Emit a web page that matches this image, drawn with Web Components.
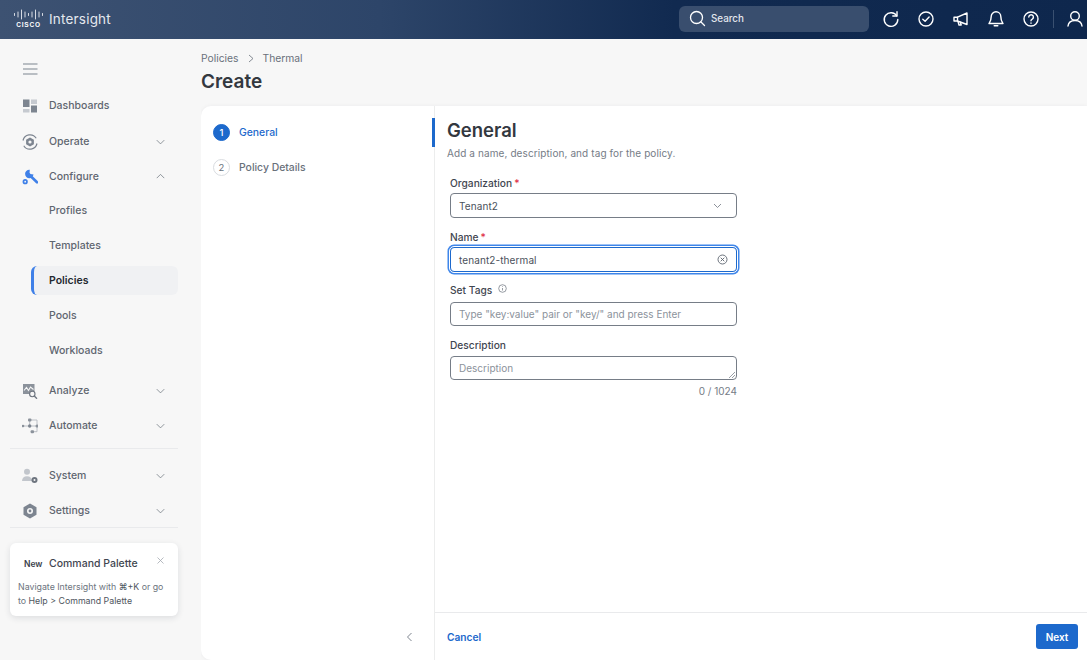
<!DOCTYPE html>
<html>
<head>
<meta charset="utf-8">
<title>Intersight</title>
<style>
  html, body { margin: 0; height: 100%; }
  body { font-family: Inter, "Liberation Sans", sans-serif; background: #f7f7f7; overflow: hidden; }
  app-shell { height: 660px; }
</style>
</head>
<body>
<app-shell>
  <top-bar slot="top"></top-bar>
  <side-nav slot="side">
    <nav-item label="Dashboards" icon="dash"></nav-item>
    <nav-item label="Operate" icon="operate" chevron="down" style="margin-top:1px"></nav-item>
    <nav-item label="Configure" icon="configure" chevron="up" style="margin-bottom:-1px"></nav-item>
    <nav-item label="Profiles" sub></nav-item>
    <nav-item label="Templates" sub></nav-item>
    <nav-item label="Policies" sub active></nav-item>
    <nav-item label="Pools" sub></nav-item>
    <nav-item label="Workloads" sub></nav-item>
    <nav-item label="Analyze" icon="analyze" chevron="down" class="gap"></nav-item>
    <nav-item label="Automate" icon="automate" chevron="down"></nav-item>
    <nav-divider></nav-divider>
    <nav-item label="System" icon="system" chevron="down"></nav-item>
    <nav-item label="Settings" icon="settings" chevron="down"></nav-item>
    <nav-divider class="last"></nav-divider>
    <promo-card></promo-card>
  </side-nav>
  <create-page slot="main"></create-page>
</app-shell>

<script>
// icons used by the nav and the top bar
const ICONS = {
  dash: `<rect x="1" y="1.500" width="6.500" height="7.500" fill="#7d8590"/><rect x="9" y="1.500" width="6" height="4.500" fill="#c6cad0"/><rect x="1" y="11" width="6.500" height="3.500" fill="#c6cad0"/><rect x="9" y="7.500" width="6" height="7" fill="#7d8590"/>`,
  operate: `<path d="M1 6.500A7.200 7.200 0 0 1 14.200 4.300M15 9.500A7.200 7.200 0 0 1 1.800 11.700" fill="none" stroke="#7d8590" stroke-width="1.200"/><path d="M8 3.500l3.900 2.250v4.500L8 12.500l-3.900-2.250v-4.500z" fill="#7d8590"/><circle cx="8" cy="8" r="1.600" fill="#f7f7f7"/>`,
  configure: `<circle cx="7.300" cy="5" r="4.200" fill="#3f80e8"/><path d="M7.500 5L7.800 0H13L12 5.500z" fill="#f7f7f7"/><circle cx="7.300" cy="5" r="1" fill="#3f80e8"/><path d="M8 6.500l7 6.800" stroke="#3f80e8" stroke-width="2.600" stroke-linecap="round"/><circle cx="3.200" cy="12.700" r="2.600" fill="#3f80e8"/><circle cx="3.200" cy="12.700" r=".9" fill="#f7f7f7"/>`,
  analyze: `<rect x="1" y="1" width="11.500" height="10" fill="#8b929b"/><path d="M2 7.500l2.500-3 2 3 2-3.500 3 2.500" fill="none" stroke="#f7f7f7" stroke-width="1.100"/><circle cx="10.300" cy="11" r="2.700" fill="#f7f7f7" stroke="#6e757f" stroke-width="1.100"/><path d="M12.300 13l2.700 2.800" stroke="#6e757f" stroke-width="1.300"/>`,
  automate: `<path d="M1 8h14M7.700 2v6M7.700 2H15v6M15 8v5.700h-4.700" fill="none" stroke="#b4b9c0" stroke-width=".9"/><circle cx="1" cy="8" r="1.300" fill="#8b929b"/><circle cx="7.700" cy="8" r="1.700" fill="#7d8590"/><circle cx="15" cy="8" r="1.500" fill="#8b929b"/><rect x="6" y=".500" width="3.400" height="3" rx="1" fill="#8b929b"/><rect x="8.600" y="12.200" width="3.400" height="3" rx="1" fill="#8b929b"/>`,
  system: `<circle cx="5" cy="3.800" r="3" fill="#c2c6cc"/><path d="M0 13c0-3 2-4.800 5-4.800S10 10 10 13z" fill="#c2c6cc"/><circle cx="12.500" cy="12" r="3" fill="#6e757f"/><circle cx="12.500" cy="12" r="1" fill="#f7f7f7"/>`,
  settings: `<path d="M8 .5l6.500 3.700v7.600L8 15.500l-6.500-3.700V4.200z" fill="#7d8590"/><circle cx="8" cy="8" r="3" fill="#f7f7f7"/><circle cx="8" cy="8" r="1.400" fill="#7d8590"/>`
};

class AppShell extends HTMLElement {
  constructor() {
    super();
    this.attachShadow({ mode: 'open' });
    this.shadowRoot.innerHTML = `
      <style>
        :host { display: grid; grid-template-rows: 39px 1fr; grid-template-columns: 201px 1fr; }
        .top { grid-column: 1 / 3; }
        .main { min-width: 0; min-height: 0; }
      </style>
      <div class="top"><slot name="top"></slot></div>
      <div><slot name="side"></slot></div>
      <div class="main"><slot name="main"></slot></div>`;
  }
}

class TopBar extends HTMLElement {
  constructor() {
    super();
    this.attachShadow({ mode: 'open' });
    const s = 'fill="none" stroke="#fff" stroke-width="1.400" stroke-linecap="round" stroke-linejoin="round"';
    this.shadowRoot.innerHTML = `
      <style>
        :host { display: flex; align-items: center; box-sizing: border-box; height: 39px; padding-bottom: 2px; color: #fff;
          background: linear-gradient(90deg, #3d5272 0%, #2d4569 35%, #112a50 62%, #0e274d 100%); }
        .logo { display: flex; flex-direction: column; align-items: center; width: 29px; margin: 0 6px 0 14px; }
        .logo svg { display: block; }
        .logo span { font: 700 6.500px/7px "Liberation Sans", sans-serif; letter-spacing: .8px; margin-top: 1px; }
        .name { font-size: 13.500px; font-weight: 400; letter-spacing: .2px; color: #e4e8ee; }
        .search { margin-left: auto; width: 190px; height: 26px; box-sizing: border-box; padding-left: 10px;
          display: flex; align-items: center; gap: 5px; border-radius: 6px; background: #394e6e;
          font-size: 9.800px; font-weight: 500; color: #e3e7ed; }
        .tools { display: flex; align-items: center; margin-left: 13px; gap: 17px; padding-right: 3px; }
        .tools svg { display: block; width: 18px; height: 18px; }
        .sep { width: 1px; height: 18px; background: #3a5070; margin: 0 -5px 0 -4px; }
      </style>
      <div class="logo">
        <svg width="29" height="11" viewBox="0 0 29 11" stroke="#e8ebf0" stroke-width=".9" stroke-linecap="round">
          <path d="M.5 4.500v2M4 3v5M7.500 1v9M11 3v5M14.500 4.500v2M18 3v5M21.500 1v9M25 3v5M28.500 4.500v2"/>
        </svg>
        <span>CISCO</span>
      </div>
      <div class="name">Intersight</div>
      <div class="search">
        <svg width="17" height="17" viewBox="0 0 17 17" fill="none" stroke="#fff" stroke-width="1.300"><circle cx="7.500" cy="7.500" r="6"/><path d="M12 12l3.500 3.500" stroke-linecap="round"/></svg>
        Search
      </div>
      <div class="tools">
        <svg viewBox="0 0 18 18" ${s}><path d="M14.800 6A6.800 6.800 0 1 0 15.800 9.500"/><path d="M15 1.800V6h-4.200"/></svg>
        <svg viewBox="0 0 18 18" ${s}><circle cx="9" cy="9" r="7"/><path d="M5.800 9.300l2.300 2 4-4.200"/></svg>
        <svg viewBox="0 0 18 18" ${s}><path d="M2 7.200h3.500L15 3v11.500L5.500 11H2z"/><path d="M5.500 7.200V11M6 11.500l1 3.500h2.200l-.8-2.800"/></svg>
        <svg viewBox="0 0 18 18" ${s}><path d="M9 1.800a4.800 4.800 0 0 0-4.800 4.800c0 4.200-1.700 5.900-2.200 6.900h14c-.5-1-2.200-2.700-2.200-6.900A4.800 4.800 0 0 0 9 1.800z"/><path d="M7.200 15.800h3.600"/></svg>
        <svg viewBox="0 0 18 18" ${s}><circle cx="9" cy="9" r="7"/><path d="M6.800 7a2.300 2.300 0 1 1 3.400 2.100c-.8.400-1.200.9-1.200 1.700"/><path d="M9 13v.2"/></svg>
        <span class="sep"></span>
        <svg viewBox="0 0 18 18" ${s}><circle cx="9" cy="6" r="4.300"/><path d="M2 16c.4-3.200 3-5.500 7-5.500s6.600 2.300 7 5.500"/></svg>
      </div>`;
  }
}

class SideNav extends HTMLElement {
  constructor() {
    super();
    this.attachShadow({ mode: 'open' });
    this.shadowRoot.innerHTML = `
      <style>
        :host { display: block; box-sizing: border-box; width: 168px; margin-left: 10px; padding-top: 20px; }
        .burger { display: block; margin: 0 0 9px 13px; }
      </style>
      <svg class="burger" width="15" height="20" viewBox="0 0 15 20" stroke="#7d8590" stroke-width="1.200"><path d="M0 5h14.500M0 10h14.500M0 15h14.500"/></svg>
      <slot></slot>`;
  }
}

class NavItem extends HTMLElement {
  connectedCallback() {
    if (this.shadowRoot) return;
    this.attachShadow({ mode: 'open' });
    const icon = this.getAttribute('icon');
    const chev = this.getAttribute('chevron');
    const path = chev === 'up' ? 'M1 6.500l5-5 5 5' : 'M1 2.500l5 5 5-5';
    this.shadowRoot.innerHTML = `
      <style>
        :host { display: flex; align-items: center; height: 35px; font-size: 10.500px; font-weight: 500; color: #5f6670; }
        :host(.gap) { margin-top: 5px; }
        .icon { width: 16px; height: 16px; margin-left: 12px; margin-right: 11px; flex: none; }
        .label { flex: 1; }
        .chev { margin-right: 13px; }
        .row { display: flex; align-items: center; flex: 1; height: 29px; margin-left: 21px; padding-left: 15px;
          border-radius: 6px; border-left: 3px solid transparent; }
        :host([active]) .row { background: #f0f1f3; border-left-color: #3f80e8; color: #23282f; font-weight: 600; }
      </style>
      ${this.hasAttribute('sub')
        ? `<div class="row"><span class="label">${this.getAttribute('label')}</span></div>`
        : `<svg class="icon" viewBox="0 0 16 16">${ICONS[icon] || ''}</svg>
           <span class="label">${this.getAttribute('label')}</span>
           ${chev ? `<svg class="chev" width="9" height="8" viewBox="0 0 12 10" fill="none" stroke="#6e757f" stroke-width="1"><path d="${path}"/></svg>` : ''}`}`;
  }
}

class NavDivider extends HTMLElement {
  constructor() {
    super();
    this.attachShadow({ mode: 'open' });
    this.shadowRoot.innerHTML = `
      <style>
        :host { display: block; height: 1px; background: #e9eaec; margin: 5px 0 9px; }
        :host(.last) { margin: -1px 0 15px; }
      </style>`;
  }
}

class PromoCard extends HTMLElement {
  constructor() {
    super();
    this.attachShadow({ mode: 'open' });
    this.shadowRoot.innerHTML = `
      <style>
        :host { display: block; box-sizing: border-box; height: 73px; padding: 14px 8px 0; background: #fff;
          border-radius: 6px; box-shadow: 0 2px 6px rgba(30, 40, 60, .12); position: relative; }
        .head { display: flex; align-items: baseline; padding-left: 6px; font-size: 10.500px; font-weight: 500; color: #3f4650; }
        .new { font-size: 8.500px; font-weight: 600; width: 25px; color: #3a414b; }
        .x { position: absolute; top: 13px; right: 13px; }
        p { margin: 10px 0 0; font-size: 8.800px; line-height: 14px; color: #6d747e; }
        b { font-weight: 400; color: #4f5660; }
      </style>
      <div class="head"><span class="new">New</span>Command Palette</div>
      <svg class="x" width="9" height="9" viewBox="0 0 9 9" stroke="#a4a9b1" stroke-width=".8"><path d="M1.500 1.500l6 6M7.500 1.500l-6 6"/></svg>
      <p>Navigate Intersight with <b>⌘+K</b> or go<br>to <b>Help &gt; Command Palette</b></p>`;
  }
}

class FormField extends HTMLElement {
  connectedCallback() {
    if (this.shadowRoot) return;
    this.attachShadow({ mode: 'open' });
    const req = this.hasAttribute('required') ? '<i>*</i>' : '';
    this.shadowRoot.innerHTML = `
      <style>
        :host { display: block; width: 287px; }
        label { display: flex; align-items: center; height: 12px; margin-bottom: var(--label-gap, 4px); font-size: 10.200px; font-weight: 500; color: #3f4650; }
        i { font-style: normal; color: #e0344a; margin-left: 2px; }
        .box { position: relative; display: flex; align-items: center; box-sizing: border-box; height: 25px; padding: 0 8px;
          background: #fff; border: 1px solid #767d87; border-radius: 4px; font-size: 10px; color: #4a515b; letter-spacing: .1px; }
        :host([focused]) .box { border-color: #1d69cc; outline: 1px solid #fff; box-shadow: 0 0 0 2.500px #3f86ea; }
        :host([ghost]) .box { height: 24px; color: #8b929b; letter-spacing: 0; }
        .text { flex: 1; white-space: nowrap; }
        ::slotted(svg) { display: block; }
      </style>
      <label>${this.getAttribute('label')}${req}<slot name="hint"></slot></label>
      <div class="box"><span class="text">${this.getAttribute('value')}</span><slot></slot></div>`;
  }
}

class CreatePage extends HTMLElement {
  constructor() {
    super();
    this.attachShadow({ mode: 'open' });
    this.shadowRoot.innerHTML = `
      <style>
        :host { display: flex; flex-direction: column; height: 621px; overflow: hidden; }
        .crumbs { display: flex; align-items: center; gap: 9px; height: 14px; margin-top: 12px; font-size: 10.300px; color: #6a717b; }
        h1 { margin: 6px 0 13px; font-size: 19px; line-height: 22px; font-weight: 600; color: #33383f; }
        .card { flex: 1; display: flex; min-height: 0; background: #fff; border-radius: 10px 0 0 10px; box-shadow: 0 0 4px rgba(30, 40, 60, .05); }
        .steps { position: relative; box-sizing: border-box; width: 233px; padding: 17px 12px 0; flex: none; }
        .step { display: flex; align-items: center; gap: 9px; height: 18px; margin-bottom: 17px; font-size: 10.400px; font-weight: 500; color: #6a717b; }
        .step span { display: flex; align-items: center; justify-content: center; box-sizing: border-box; width: 17px; height: 17px; border-radius: 50%;
          border: 1px solid #d9dce0; font-size: 9.500px; font-weight: 400; }
        .step.on { color: #1d69cc; }
        .step.on span { background: #1d69cc; border-color: #1d69cc; color: #fff; font-weight: 500; }
        .collapse { position: absolute; bottom: 18px; right: 21px; }
        .panel { flex: 1; display: flex; flex-direction: column; min-width: 0; border-left: 1px solid #eceded; position: relative; }
        .mark { position: absolute; left: -3px; top: 12px; width: 3px; height: 29px; background: #1d69cc; }
        .form { flex: 1; padding: 13px 12px 0; }
        h2 { margin: 0; font-size: 18.500px; line-height: 22px; font-weight: 600; color: #33383f; }
        .sub { margin: 6px 0 17px; font-size: 10px; line-height: 13px; color: #757c86; letter-spacing: .1px; }
        form-field { margin-left: 3px; }
        form-field + form-field { margin-top: 13px; }
        form-field.tags { margin-top: 12px; --label-gap: 6px; }
        form-field.desc { --label-gap: 5px; }
        .count { width: 287px; margin: 5px 0 0 3px; text-align: right; font-size: 10px; color: #757c86; }
        .foot { display: flex; align-items: center; justify-content: space-between; box-sizing: border-box; height: 48px;
          padding: 0 9px 0 12px; border-top: 1px solid #e9eaec; }
        .cancel { font-size: 10.200px; font-weight: 600; color: #1d69cc; }
        .next { display: flex; align-items: center; justify-content: center; width: 42px; height: 25px; border-radius: 3px;
          background: #1d69cc; color: #fff; font-size: 10px; font-weight: 600; }
      </style>
      <div class="crumbs">
        <span>Policies</span>
        <svg width="6" height="9" viewBox="0 0 6 9" fill="none" stroke="#6a717b" stroke-width=".8"><path d="M1 1l4 3.500L1 8"/></svg>
        <span>Thermal</span>
      </div>
      <h1>Create</h1>
      <div class="card">
        <div class="steps">
          <div class="step on"><span>1</span>General</div>
          <div class="step"><span>2</span>Policy Details</div>
          <svg class="collapse" width="7" height="10" viewBox="0 0 7 10" fill="none" stroke="#7f8690" stroke-width="1"><path d="M5.500 1L1.500 5l4 4"/></svg>
        </div>
        <div class="panel">
          <div class="mark"></div>
          <div class="form">
            <h2>General</h2>
            <div class="sub">Add a name, description, and tag for the policy.</div>
            <form-field label="Organization" value="Tenant2" required>
              <svg width="9" height="6" viewBox="0 0 9 6" fill="none" stroke="#6e757f" stroke-width=".8" style="margin-right:6px"><path d="M1 1l3.500 3.500L8 1"/></svg>
            </form-field>
            <form-field label="Name" value="tenant2-thermal" required focused>
              <svg width="11" height="11" viewBox="0 0 11 11" fill="none" stroke="#5a626d" stroke-width=".9"><circle cx="5.500" cy="5.500" r="4.500"/><path d="M3.700 3.700l3.600 3.600M7.300 3.700l-3.600 3.600"/></svg>
            </form-field>
            <form-field class="tags" label="Set Tags" value='Type "key:value" pair or "key/" and press Enter' ghost>
              <svg slot="hint" width="9" height="9" viewBox="0 0 9 9" fill="none" stroke="#6a717b" stroke-width=".7" style="margin:0 0 3px 6px"><circle cx="4.500" cy="4.500" r="3.800"/><path d="M4.500 4v2.500M4.500 2.300v.7"/></svg>
            </form-field>
            <form-field class="desc" label="Description" value="Description" ghost>
              <svg width="6" height="6" viewBox="0 0 6 6" stroke="#6e757f" stroke-width=".7" style="position:absolute;right:1px;bottom:1px"><path d="M0 6l6-6M3 6l3-3"/></svg>
            </form-field>
            <div class="count">0 / 1024</div>
          </div>
          <div class="foot">
            <span class="cancel">Cancel</span>
            <span class="next">Next</span>
          </div>
        </div>
      </div>`;
  }
}

customElements.define('app-shell', AppShell);
customElements.define('top-bar', TopBar);
customElements.define('side-nav', SideNav);
customElements.define('nav-item', NavItem);
customElements.define('nav-divider', NavDivider);
customElements.define('promo-card', PromoCard);
customElements.define('form-field', FormField);
customElements.define('create-page', CreatePage);
</script>
</body>
</html>
